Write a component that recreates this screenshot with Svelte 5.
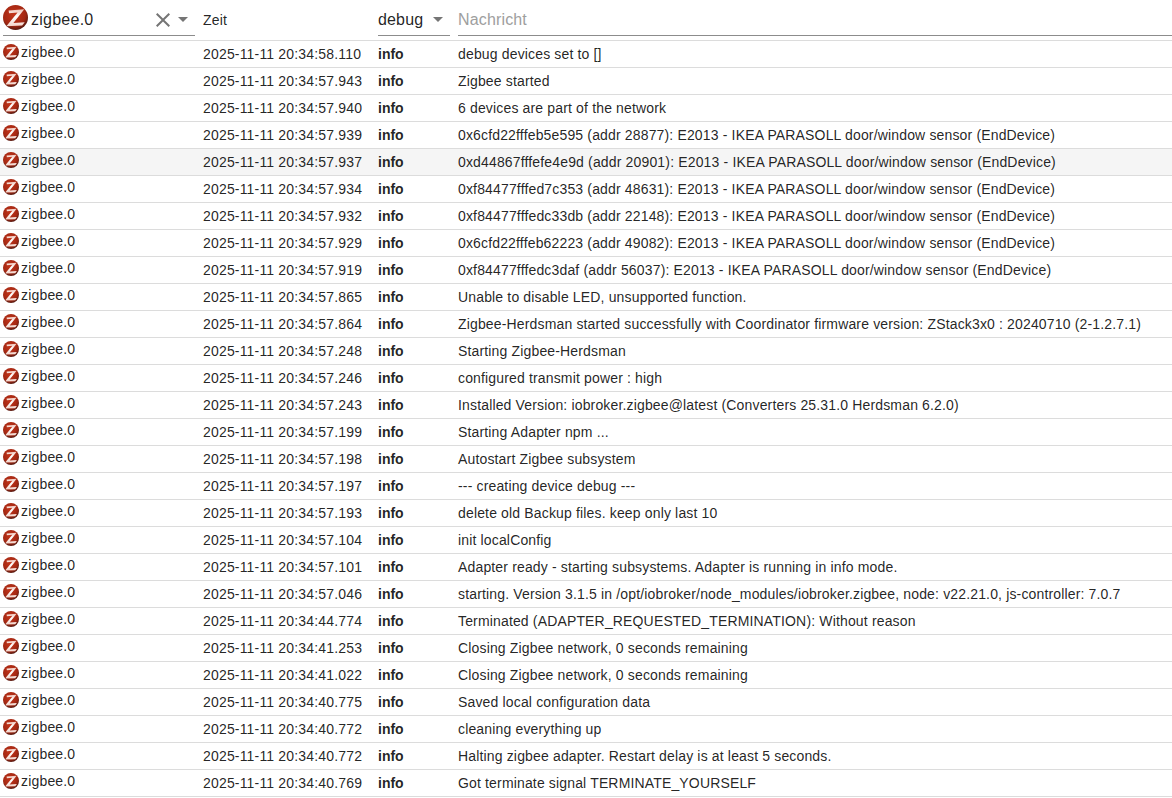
<script>
    const lines = [
        ['20:34:58.110', 'debug devices set to []'],
        ['20:34:57.943', 'Zigbee started'],
        ['20:34:57.940', '6 devices are part of the network'],
        ['20:34:57.939', '0x6cfd22fffeb5e595 (addr 28877): E2013 - IKEA PARASOLL door/window sensor (EndDevice)'],
        ['20:34:57.937', '0xd44867fffefe4e9d (addr 20901): E2013 - IKEA PARASOLL door/window sensor (EndDevice)'],
        ['20:34:57.934', '0xf84477fffed7c353 (addr 48631): E2013 - IKEA PARASOLL door/window sensor (EndDevice)'],
        ['20:34:57.932', '0xf84477fffedc33db (addr 22148): E2013 - IKEA PARASOLL door/window sensor (EndDevice)'],
        ['20:34:57.929', '0x6cfd22fffeb62223 (addr 49082): E2013 - IKEA PARASOLL door/window sensor (EndDevice)'],
        ['20:34:57.919', '0xf84477fffedc3daf (addr 56037): E2013 - IKEA PARASOLL door/window sensor (EndDevice)'],
        ['20:34:57.865', 'Unable to disable LED, unsupported function.'],
        ['20:34:57.864', 'Zigbee-Herdsman started successfully with Coordinator firmware version: ZStack3x0 : 20240710 (2-1.2.7.1)'],
        ['20:34:57.248', 'Starting Zigbee-Herdsman'],
        ['20:34:57.246', 'configured transmit power : high'],
        ['20:34:57.243', 'Installed Version: iobroker.zigbee@latest (Converters 25.31.0 Herdsman 6.2.0)'],
        ['20:34:57.199', 'Starting Adapter npm ...'],
        ['20:34:57.198', 'Autostart Zigbee subsystem'],
        ['20:34:57.197', '--- creating device debug ---'],
        ['20:34:57.193', 'delete old Backup files. keep only last 10'],
        ['20:34:57.104', 'init localConfig'],
        ['20:34:57.101', 'Adapter ready - starting subsystems. Adapter is running in info mode.'],
        ['20:34:57.046', 'starting. Version 3.1.5 in /opt/iobroker/node_modules/iobroker.zigbee, node: v22.21.0, js-controller: 7.0.7'],
        ['20:34:44.774', 'Terminated (ADAPTER_REQUESTED_TERMINATION): Without reason'],
        ['20:34:41.253', 'Closing Zigbee network, 0 seconds remaining'],
        ['20:34:41.022', 'Closing Zigbee network, 0 seconds remaining'],
        ['20:34:40.775', 'Saved local configuration data'],
        ['20:34:40.772', 'cleaning everything up'],
        ['20:34:40.772', 'Halting zigbee adapter. Restart delay is at least 5 seconds.'],
        ['20:34:40.769', 'Got terminate signal TERMINATE_YOURSELF']
    ]
</script>

{#snippet logo(size)}
    <svg class="logo" width={size} height={size} viewBox="0 0 24 24">
        <circle cx="12" cy="12" r="12" fill="url(#ball)" />
        <path d="M5.4 5.2 L20.4 4 L10 17.4 L20.8 16.6 L18.4 19.8 L3.2 20.4 L14 7.2 L5.8 7.8 Z" fill="url(#zed)" />
    </svg>
{/snippet}

<svg class="defs" width="0" height="0">
    <defs>
        <radialGradient id="ball" cx="45%" cy="38%" r="64%">
            <stop offset="0%" stop-color="#c4361b" />
            <stop offset="70%" stop-color="#a32712" />
            <stop offset="100%" stop-color="#4e1810" />
        </radialGradient>
        <linearGradient id="zed" x1="0" y1="0" x2="0" y2="1">
            <stop offset="0%" stop-color="#f0c4b8" />
            <stop offset="45%" stop-color="#ffffff" />
            <stop offset="100%" stop-color="#f3d3c9" />
        </linearGradient>
    </defs>
</svg>

<div class="log">
    <div class="head">
        <div class="c-adapter">
            <div class="select adapter-select">
                {@render logo(25)}
                <span class="sel-text">zigbee.0</span>
                <svg class="clear" width="24" height="24" viewBox="0 0 24 24">
                    <path d="M19 6.41 17.59 5 12 10.59 6.41 5 5 6.41 10.59 12 5 17.59 6.41 19 12 13.41 17.59 19 19 17.59 13.41 12z" fill="#757575" />
                </svg>
                <span class="arrow"></span>
            </div>
        </div>
        <div class="c-time head-time">Zeit</div>
        <div class="c-level">
            <div class="select level-select">
                <span class="sel-text">debug</span>
                <span class="arrow"></span>
            </div>
        </div>
        <div class="c-msg">
            <div class="select msg-input">Nachricht</div>
        </div>
    </div>

    {#each lines as [time, msg], i}
        <div class="row" class:hover={i === 4}>
            <div class="c-adapter cell-adapter">
                {@render logo(16)}
                <span>zigbee.0</span>
            </div>
            <div class="c-time">2025-11-11 {time}</div>
            <div class="c-level level">info</div>
            <div class="c-msg">{msg}</div>
        </div>
    {/each}
</div>

<style>
:global(body) {
    background: #fff;
    font-family: "Liberation Sans", Arial, sans-serif;
    color: rgba(0, 0, 0, 0.87);
}

.defs {
    position: absolute;
}

.log {
    width: 1172px;
}

.head {
    display: flex;
    height: 41px;
    box-sizing: border-box;
    border-bottom: 1px solid #dcdcdc;
}

.row {
    display: flex;
    align-items: center;
    height: 27px;
    box-sizing: border-box;
    border-bottom: 1px solid #dcdcdc;
    font-size: 14px;
    letter-spacing: 0.175px;
    white-space: nowrap;
}

.row.hover {
    background: #f5f5f5;
}

.c-adapter {
    width: 203px;
    flex: none;
    box-sizing: border-box;
}

.c-time {
    width: 175px;
    flex: none;
}

.c-level {
    width: 80px;
    flex: none;
}

.c-msg {
    flex: 1;
}

.row .c-msg {
    letter-spacing: 0.155px;
}

.level {
    font-weight: bold;
    letter-spacing: 0;
}

.cell-adapter {
    display: flex;
    align-items: center;
    gap: 2px;
    padding-left: 3px;
    margin-top: -4px;
}

.select {
    display: flex;
    align-items: center;
    height: 36px;
    box-sizing: border-box;
    padding-top: 4px;
    border-bottom: 1px solid #8c8c8c;
    font-size: 16px;
    letter-spacing: 0.15px;
}

.adapter-select {
    margin-left: 3px;
    width: 192px;
    letter-spacing: 0.25px;
}

.adapter-select .logo {
    margin: -4px 3px 0 0;
}

.sel-text {
    flex: 1;
}

.clear {
    margin-right: 3px;
}

.arrow {
    width: 0;
    height: 0;
    margin-right: 7px;
    border-left: 5px solid transparent;
    border-right: 5px solid transparent;
    border-top: 5px solid #757575;
}

.head-time {
    font-size: 14px;
    letter-spacing: 0.175px;
    line-height: 40px;
}

.level-select {
    width: 72px;
}

.msg-input {
    color: #9e9e9e;
}
</style>
